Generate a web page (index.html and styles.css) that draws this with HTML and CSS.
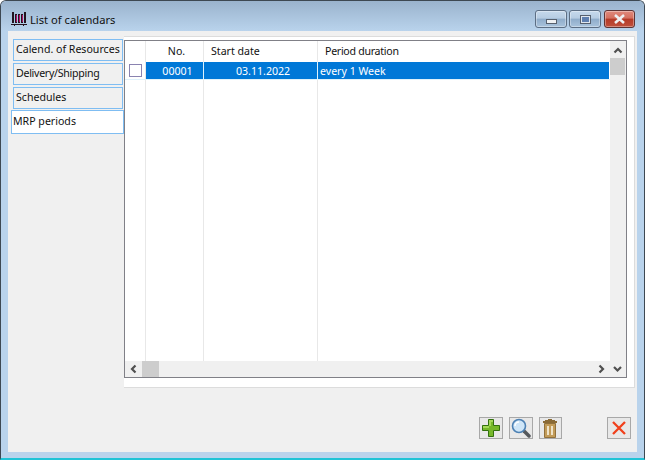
FILE: index.html
```html
<!DOCTYPE html>
<html>

<head>
    <meta charset="UTF-8">
    <title>List of calendars</title>
    <link rel="stylesheet" href="styles.css">
</head>

<body>

    <div class="window">
        <div class="titlebar">
            <svg class="app-icon" width="16" height="16" viewBox="0 0 16 16">
                <path d="M1 1h2v11H1zM4 3h2v9H4zM7 3h2v9H7zM10 3h2v9h-2zM13 1h2v11h-2z" fill="#23131f" />
                <path d="M5 4h1v7H5zM8 4h1v7H8zM11 4h1v7h-1z" fill="#b0106a" />
                <path d="M0 13h16v1H0zM3 14h1v1H3zM12 14h1v1h-1z" fill="#23131f" />
            </svg>
            <span class="title-text">List of calendars</span>
            <div class="caption-btns">
                <div class="caption-btn">
                    <span class="min-glyph"></span>
                </div>
                <div class="caption-btn">
                    <span class="max-glyph"></span>
                </div>
                <div class="caption-btn close">
                    <svg width="13" height="10" viewBox="0 0 13 10">
                        <path d="M2 1l9 8M11 1l-9 8" stroke="#eef0f2" stroke-width="2.6" fill="none" />
                    </svg>
                </div>
            </div>
        </div>

        <div class="client">
            <div class="main">
                <ul class="tabs">
                    <li>Calend. of Resources</li>
                    <li class="tight">Delivery/Shipping</li>
                    <li>Schedules</li>
                    <li class="active">MRP periods</li>
                </ul>

                <div class="panel">
                    <div class="grid">
                        <div class="grid-body">
                            <div class="grid-row grid-head">
                                <div class="cell col-check"></div>
                                <div class="cell col-no">No.</div>
                                <div class="cell col-date">Start date</div>
                                <div class="cell col-period tight">Period duration</div>
                            </div>
                            <div class="grid-row selected">
                                <div class="cell col-check"><span class="checkbox"></span></div>
                                <div class="cell col-no">00001</div>
                                <div class="cell col-date">03.11.2022</div>
                                <div class="cell col-period">every 1 Week</div>
                            </div>
                            <div class="grid-row filler">
                                <div class="cell col-check"></div>
                                <div class="cell col-no"></div>
                                <div class="cell col-date"></div>
                                <div class="cell col-period"></div>
                            </div>
                        </div>

                        <div class="vscroll">
                            <svg class="arrow" width="16" height="17" viewBox="0 0 16 17">
                                <path d="M4.500 11.500L8 8l3.500 3.500" stroke="#505050" stroke-width="2.200" fill="none" />
                            </svg>
                            <div class="v-thumb"></div>
                            <div class="scroll-space"></div>
                        </div>

                        <div class="hscroll">
                            <svg class="arrow" width="17" height="16" viewBox="0 0 17 16">
                                <path d="M10.500 4.500L7 8l3.500 3.500" stroke="#505050" stroke-width="2.200" fill="none" />
                            </svg>
                            <div class="h-thumb"></div>
                            <div class="scroll-space"></div>
                            <svg class="arrow" width="17" height="16" viewBox="0 0 17 16">
                                <path d="M6.500 4.500L10 8l-3.500 3.500" stroke="#505050" stroke-width="2.200" fill="none" />
                            </svg>
                        </div>

                        <div class="corner">
                            <svg class="arrow" width="16" height="16" viewBox="0 0 16 16">
                                <path d="M4 6l3.500 3.500L11 6" stroke="#505050" stroke-width="2.200" fill="none" />
                            </svg>
                        </div>
                    </div>
                </div>
            </div>

            <div class="toolbar">
                <button class="tool-btn">
                    <svg width="20" height="20" viewBox="0 0 20 20">
                        <path d="M7.500 1.500h5v6h6v5h-6v6h-5v-6h-6v-5h6z" fill="#76b82a" stroke="#33700f" stroke-width="1" />
                        <path d="M8 2h4v2H10v4H8zM2 8h6v2H2z" fill="#a5d85a" />
                    </svg>
                </button>
                <button class="tool-btn">
                    <svg width="20" height="20" viewBox="0 0 20 20">
                        <path d="M13 13l5 5" stroke="#55585c" stroke-width="3.500" stroke-linecap="round" />
                        <circle cx="8" cy="8" r="6.500" fill="#cfe6f8" stroke="#4d81b4" stroke-width="1.600" />
                        <path d="M4 8a4 4 0 0 1 4-4" stroke="#fff" stroke-width="1.500" fill="none" />
                    </svg>
                </button>
                <button class="tool-btn">
                    <svg width="16" height="19" viewBox="0 0 16 19">
                        <path d="M6 0h4v1h3v1h2v2H1V2h2V1h3z" fill="#8a6a35" />
                        <path d="M2.500 4.500h11v14h-11z" fill="#c29b58" stroke="#91703a" stroke-width="1" />
                        <path d="M5 7h2v9H5zM9 7h2v9H9z" fill="#efe3c8" />
                    </svg>
                </button>
                <button class="tool-btn close-btn">
                    <svg width="14" height="14" viewBox="0 0 14 14">
                        <path d="M1 1l12 12M13 1L1 13" stroke="#f0401c" stroke-width="2.300" fill="none" />
                    </svg>
                </button>
            </div>
        </div>
    </div>

</body>

</html>
```

FILE: styles.css
```css
html,
body {
    margin: 0;
    padding: 0;
}

div,
ul,
li,
span,
button {
    box-sizing: border-box;
}

body {
    font-family: "Noto Sans", "Liberation Sans", sans-serif;
    font-size: 10.6px;
    color: #111;
    background: #fff;
}

.window {
    display: flex;
    flex-direction: column;
    width: 645px;
    height: 460px;
    padding: 0 7px 6px 7px;
    background: #b9d3ec;
    border: 1px solid #3d4852;
    border-bottom: 2px solid #1fc3d6;
    border-radius: 6px 6px 0 0;
}

.titlebar {
    display: flex;
    align-items: flex-start;
    flex: none;
    height: 30px;
    margin: 0 -7px;
    padding: 10px 8px 0 10px;
    background: linear-gradient(#9ab3cd, #b9d3ec);
    border-radius: 5px 5px 0 0;
}

.app-icon {
    flex: none;
}

.title-text {
    margin-left: 3px;
    font-size: 11.2px;
    line-height: 18px;
    color: #111;
}

.caption-btns {
    display: flex;
    gap: 2px;
    margin-left: auto;
    margin-top: -1px;
    margin-right: 1px;
}

.caption-btn {
    display: flex;
    align-items: center;
    justify-content: center;
    width: 32px;
    height: 18px;
    border: 1px solid #5c6e84;
    border-radius: 3px;
    background: linear-gradient(#c6d9ec 0, #b6cce2 45%, #8facca 50%, #a9c3dc 100%);
    box-shadow: inset 0 0 0 1px rgba(255, 255, 255, .35);
}

.caption-btn.close {
    width: 31px;
    margin-left: 1px;
    background: linear-gradient(#e0897c 0, #d4705f 45%, #b53a27 50%, #c0503c 100%);
    border-color: #5e3434;
}

.min-glyph {
    width: 11px;
    height: 5px;
    margin-top: 5px;
    background: #eef1f4;
    border: 1px solid #56606e;
}

.max-glyph {
    width: 11px;
    height: 9px;
    background: #5e7fb0;
    border: 2px solid #dfe6ee;
    outline: 1px solid #56606e;
    outline-offset: -1px;
}

.client {
    display: flex;
    flex-direction: column;
    flex: 1;
    min-height: 0;
    background: #f0f0f0;
}

.main {
    display: flex;
    align-items: flex-start;
    flex: none;
    padding-top: 5px;
}

.tabs {
    flex: none;
    width: 116px;
    margin: 0;
    padding: 3px 0 0 2px;
    list-style-type: none;
}

.tabs li {
    width: 110px;
    height: 22px;
    margin: 0 0 2px 3px;
    padding-left: 2px;
    line-height: 18px;
    white-space: nowrap;
    background: #f0f0f0;
    border: 1px solid #7fbdf2;
}

.tabs li.active {
    width: 113px;
    height: 24px;
    margin: -1px 0 0 1px;
    padding-left: 1px;
    line-height: 21px;
    background: #fff;
}

.tight {
    letter-spacing: -.28px;
}

.panel {
    width: 511px;
    height: 352px;
    padding: 3px 7px 9px 0;
    background: #fff;
    border: 1px solid #dcdcdc;
    border-left-width: 0;
}

.grid {
    display: grid;
    grid-template-columns: 1fr 16px;
    grid-template-rows: 1fr 16px;
    height: 338px;
    background: #fff;
    border: 1px solid #808087;
}

.grid-body {
    display: flex;
    flex-direction: column;
    min-height: 0;
}

.grid-row {
    display: flex;
    flex: none;
    height: 18px;
}

.grid-head {
    height: 21px;
    line-height: 20px;
}

.filler {
    flex: 1;
}

.cell {
    border-right: 1px solid #e8e8e8;
    white-space: nowrap;
}

.col-check {
    width: 21px;
}

.col-no {
    width: 58px;
    text-align: center;
}

.col-date {
    width: 114px;
}

.col-period {
    flex: 1;
    border-right: 0;
}

.grid-head .col-no {
    padding-left: 4px;
}

.grid-head .col-date,
.grid-head .col-period {
    padding-left: 7px;
}

.selected {
    line-height: 18px;
    color: #fff;
    border-bottom: 1px solid #dff2fb;
}

.selected .col-no,
.selected .col-date,
.selected .col-period {
    background: #0078d7;
    border-right-color: #dff2fb;
}

.selected .col-no {
    padding-left: 6px;
}

.selected .col-date {
    padding-left: 32px;
}

.selected .col-period {
    padding-left: 2px;
    margin-right: 1px;
}

.checkbox {
    display: block;
    width: 13px;
    height: 13px;
    margin: 2px 0 0 4px;
    background: #fff;
    border: 1px solid #8a83b0;
}

.vscroll {
    display: flex;
    flex-direction: column;
    background: #f0f0f0;
}

.v-thumb {
    flex: none;
    width: 15px;
    height: 17px;
    background: #cdcdcd;
}

.h-thumb {
    flex: none;
    width: 17px;
    height: 16px;
    background: #cdcdcd;
}

.scroll-space {
    flex: 1;
}

.hscroll {
    display: flex;
    background: #f0f0f0;
}

.corner {
    background: #f0f0f0;
}

.arrow {
    display: block;
    flex: none;
}

.toolbar {
    display: flex;
    flex: none;
    gap: 6px;
    padding: 29px 6px 0 471px;
}

.tool-btn {
    display: flex;
    align-items: center;
    justify-content: center;
    width: 24px;
    height: 22px;
    padding: 0;
    background: #e8e8e8;
    border: 1px solid #a8a8a8;
}

.close-btn {
    margin-left: 39px;
}
```
